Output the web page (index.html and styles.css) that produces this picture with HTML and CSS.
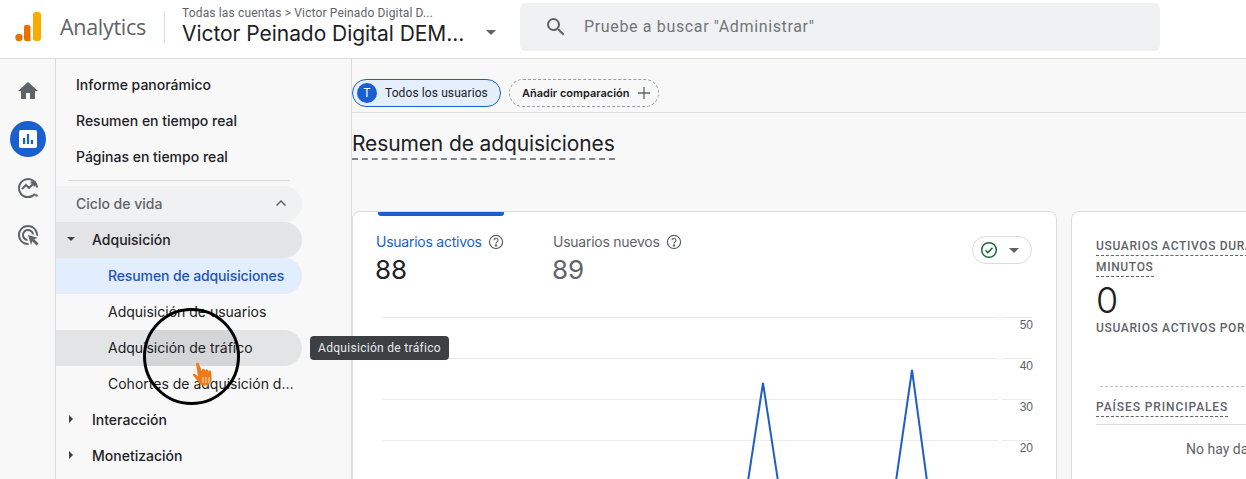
FILE: index.html
```html
<!DOCTYPE html>
<html lang="es">
<head>
    <meta charset="UTF-8">
    <meta name="viewport" content="width=device-width, initial-scale=1.0">
    <title>Resumen de adquisiciones</title>
    <link rel="stylesheet" href="styles.css">
</head>
<body>
    <header class="topbar">
        <div class="brand">
            <svg class="brand-logo" width="28" height="32" viewBox="0 0 28 32">
                <circle cx="5" cy="26.500" r="3.700" fill="#e37400"/>
                <path d="M10 16a2 2 0 0 1 2-2h2.500a2 2 0 0 1 2 2v14h-4.500a2 2 0 0 1-2-2z" fill="#e37400"/>
                <rect x="19" y="1" width="8" height="29" rx="3" fill="#f9ab00"/>
            </svg>
            <span class="brand-name">Analytics</span>
        </div>
        <div class="account">
            <div class="account-path">Todas las cuentas <span class="path-sep">&gt;</span> Victor Peinado Digital D...</div>
            <div class="account-name">Victor Peinado Digital DEM...</div>
        </div>
        <span class="caret account-caret"></span>
        <div class="search">
            <svg width="24" height="24" viewBox="0 0 24 24" fill="#5f6368"><path d="M15.500 14h-.79l-.28-.27A6.470 6.470 0 0 0 16 9.500 6.500 6.500 0 1 0 9.500 16c1.610 0 3.090-.59 4.230-1.570l.27.28v.79l5 4.990L20.490 19zm-6 0C7.010 14 5 11.990 5 9.500S7.010 5 9.500 5 14 7.010 14 9.500 11.990 14 9.500 14z"/></svg>
            <span class="search-text">Pruebe a buscar "Administrar"</span>
        </div>
    </header>

    <div class="layout">
        <aside class="rail">
            <div class="rail-slot">
                <svg width="24" height="24" viewBox="0 0 24 24" fill="#5f6368"><path d="M10 20v-6h4v6h5v-8h3L12 3 2 12h3v8z"/></svg>
            </div>
            <div class="rail-slot">
                <div class="rail-active">
                    <svg width="20" height="20" viewBox="0 0 20 20"><rect x="1" y="1" width="18" height="18" rx="2" fill="#fff"/><path d="M5 9h2.200v6H5zM8.900 5h2.200v10H8.900zM12.800 11H15v4h-2.200z" fill="#1a5fd0"/></svg>
                </div>
            </div>
            <div class="rail-slot">
                <svg width="24" height="24" viewBox="0 0 24 24" fill="none" stroke="#5f6368" stroke-width="2"><path d="M19 18.800A9 9 0 1 1 21 12.500"/><path d="M6 14l4-4 3 3 5-5M14.500 7.500H18.500V11.500"/><circle cx="20.500" cy="20.500" r="1.300" fill="#5f6368" stroke="none"/></svg>
            </div>
            <div class="rail-slot">
                <svg width="24" height="24" viewBox="0 0 24 24" fill="#5f6368"><path d="M11.710 17.990C8.530 17.840 6 15.220 6 12c0-3.310 2.690-6 6-6 3.220 0 5.840 2.530 5.990 5.710l-2.100-.63C15.480 9.310 13.890 8 12 8c-2.210 0-4 1.790-4 4 0 1.890 1.310 3.480 3.080 3.890l.63 2.100zM22 12c0 .3-.01.6-.04.9l-1.970-.59c.01-.1.01-.21.01-.31 0-4.420-3.580-8-8-8s-8 3.580-8 8 3.580 8 8 8c.1 0 .21 0 .31-.01l.59 1.970c-.3.03-.6.04-.9.04-5.520 0-10-4.480-10-10S6.480 2 12 2s10 4.480 10 10zm-3.770 4.260L22 15l-10-3 3 10 1.260-3.770 4.270 4.270 1.980-1.980-4.280-4.260z"/></svg>
            </div>
        </aside>

        <nav class="sidenav">
            <a class="nav-item">Informe panorámico</a>
            <a class="nav-item">Resumen en tiempo real</a>
            <a class="nav-item">Páginas en tiempo real</a>
            <div class="nav-divider"></div>
            <a class="nav-item nav-section">Ciclo de vida
                <svg width="18" height="18" viewBox="0 0 18 18" fill="none" stroke="#5f6368" stroke-width="1.500"><path d="M4.500 11.500L9 7l4.500 4.500"/></svg>
            </a>
            <a class="nav-item nav-group nav-open"><span class="tri tri-down"></span>Adquisición</a>
            <a class="nav-item nav-sub nav-current">Resumen de adquisiciones</a>
            <a class="nav-item nav-sub">Adquisición de usuarios</a>
            <a class="nav-item nav-sub nav-hover"><span class="ripple"></span><span class="nav-label">Adquisición de tráfico</span></a>
            <a class="nav-item nav-sub"><span class="nav-label nav-trim">Cohortes de adquisición de usuarios</span></a>
            <a class="nav-item nav-group"><span class="tri tri-right"></span>Interacción</a>
            <a class="nav-item nav-group"><span class="tri tri-right"></span>Monetización</a>
        </nav>

        <main class="content">
            <div class="chips">
                <div class="chip chip-user"><span class="chip-badge">T</span>Todos los usuarios</div>
                <div class="chip chip-add">Añadir comparación
                    <svg width="14" height="14" viewBox="0 0 14 14" stroke="#5f6368" stroke-width="1.300"><path d="M7 1v12M1 7h12"/></svg>
                </div>
            </div>
            <div class="page-title"><h1>Resumen de adquisiciones</h1></div>

            <div class="cards">
                <section class="card card-main">
                    <div class="tab-mark"></div>
                    <div class="metrics">
                        <div class="metric metric-active">
                            <div class="metric-label">Usuarios activos
                                <svg width="16" height="16" viewBox="0 0 16 16" fill="none" stroke="#5f6368" stroke-width="1.200"><circle cx="8" cy="8" r="6.600"/><path d="M6 6.300a2 2 0 1 1 3 1.700c-.7.400-1 .8-1 1.600"/><circle cx="8" cy="11.500" r=".6" fill="#5f6368"/></svg>
                            </div>
                            <div class="metric-value">88</div>
                        </div>
                        <div class="metric metric-new">
                            <div class="metric-label">Usuarios nuevos
                                <svg width="16" height="16" viewBox="0 0 16 16" fill="none" stroke="#5f6368" stroke-width="1.200"><circle cx="8" cy="8" r="6.600"/><path d="M6 6.300a2 2 0 1 1 3 1.700c-.7.400-1 .8-1 1.600"/><circle cx="8" cy="11.500" r=".6" fill="#5f6368"/></svg>
                            </div>
                            <div class="metric-value">89</div>
                        </div>
                        <div class="status-pill">
                            <svg width="18" height="18" viewBox="0 0 18 18" fill="none" stroke="#1e6b3a" stroke-width="1.500"><circle cx="9" cy="9" r="7.300"/><path d="M5.500 9.300l2.400 2.300 4.600-4.800"/></svg>
                            <span class="caret"></span>
                        </div>
                    </div>
                    <svg class="chart" width="703" height="162" viewBox="0 0 703 162">
                        <g stroke="#e8eaed" stroke-width="1">
                            <path d="M29 0.500H645M649 0.500H679"/>
                            <path d="M29 41.500H645M649 41.500H679"/>
                            <path d="M29 82.500H645M649 82.500H679"/>
                            <path d="M29 123.500H645M649 123.500H679"/>
                        </g>
                        <g class="chart-axis">
                            <text x="680" y="12" text-anchor="end">50</text>
                            <text x="680" y="53" text-anchor="end">40</text>
                            <text x="680" y="94" text-anchor="end">30</text>
                            <text x="680" y="135" text-anchor="end">20</text>
                        </g>
                        <g fill="none" stroke="#1f5fc4" stroke-width="2">
                            <path d="M395 164L410 66L425 164"/>
                            <path d="M543 164L559 53L574 164"/>
                        </g>
                    </svg>
                </section>

                <section class="card card-side">
                    <div class="side-head"><span class="dash-label">USUARIOS ACTIVOS DURANTE LOS ÚLTIMOS 30</span><br><span class="dash-label">MINUTOS</span></div>
                    <div class="side-value">0</div>
                    <div class="side-head side-sub">USUARIOS ACTIVOS POR MINUTO</div>
                    <div class="side-spark"></div>
                    <div class="side-head side-countries"><span class="dash-label">PAÍSES PRINCIPALES</span></div>
                    <div class="side-rule"></div>
                    <div class="side-empty">No hay datos disponibles</div>
                </section>
            </div>
        </main>
    </div>

    <!-- click highlight from the screen recording, sits over the nav -->
    <div class="click-ring"></div>
    <svg class="hand" width="26" height="28" viewBox="0 0 26 28">
        <path d="M4 2.500c1-1.200 2.600-.8 3 .6l2.900 7.200.3-1.900c.6-1 2-1 2.500.1l.4 1.300.5-1c.7-.8 2-.6 2.400.5l.3 1.100.6-.6c.8-.6 2-.2 2.200.9l.6 6.300c.2 3.500-2.200 7.200-6.500 7.500-3.600.2-5.800-1.500-7.300-4.300L1 14.500c-.5-1.200.8-2.300 2-1.500l3 2.500z" fill="#ef7a1a"/>
        <path d="M11 16v6M14 16v6M17 16v6" stroke="#fff" stroke-width="1" opacity=".75"/>
    </svg>
    <div class="tooltip">Adquisición de tráfico</div>
</body>
</html>
```

FILE: styles.css
```css
* {
    margin: 0;
    padding: 0;
    box-sizing: border-box;
}

html, body {
    height: 100%;
    overflow: hidden;
}

body {
    position: relative;
    display: flex;
    flex-direction: column;
    font-family: 'Inter', 'Roboto', sans-serif;
    font-size: 14px;
    color: #202124;
    background-color: #f8f8f8;
}

/* top bar */
.topbar {
    flex: none;
    display: flex;
    align-items: center;
    height: 59px;
    padding: 3px 0 8px 14px;
    background-color: #fff;
    border-bottom: 1px solid #dadce0;
}

.brand {
    display: flex;
    align-items: center;
    gap: 18px;
    width: 151px;
    height: 32px;
    border-right: 1px solid #dadce0;
}

.brand-logo {
    flex: none;
}

.brand-name {
    font-family: 'Open Sans', sans-serif;
    font-size: 21.500px;
    color: #5f6368;
    letter-spacing: -0.3px;
}

.account {
    margin-left: 17px;
    width: 290px;
}

.account-path {
    font-family: 'Roboto', sans-serif;
    font-size: 12px;
    line-height: 14px;
    letter-spacing: 0.15px;
    color: #5f6368;
    white-space: nowrap;
}

.account-name {
    font-size: 21px;
    line-height: 28px;
    letter-spacing: -0.05px;
    white-space: nowrap;
}

.caret {
    display: inline-block;
    width: 0;
    height: 0;
    border-left: 5px solid transparent;
    border-right: 5px solid transparent;
    border-top: 5px solid #5f6368;
}

.account-caret {
    margin-left: 14px;
    margin-top: 12px;
}

.search {
    display: flex;
    align-items: center;
    gap: 16px;
    margin-left: 24px;
    width: 640px;
    height: 48px;
    padding-left: 24px;
    background-color: #f0f1f3;
    border-radius: 6px;
}

.search-text {
    font-family: 'Roboto', sans-serif;
    font-size: 16px;
    letter-spacing: 0.65px;
    color: #70757a;
}

/* body columns */
.layout {
    flex: 1;
    display: flex;
    min-height: 0;
}

.rail {
    flex: none;
    display: flex;
    flex-direction: column;
    align-items: center;
    width: 56px;
    padding-top: 8px;
    border-right: 1px solid #dadce0;
}

.rail-slot {
    display: flex;
    align-items: center;
    justify-content: center;
    width: 100%;
    height: 48px;
}

.rail-active {
    display: flex;
    align-items: center;
    justify-content: center;
    width: 36px;
    height: 36px;
    border-radius: 50%;
    background-color: #1a5fd0;
}

.sidenav {
    flex: none;
    width: 296px;
    padding-top: 8px;
    background-color: #f8f8f8;
    border-right: 1px solid #dadce0;
}

.nav-item {
    display: flex;
    align-items: center;
    width: 246px;
    height: 36px;
    padding-left: 20px;
    padding-bottom: 2px;
    font-size: 14px;
    font-weight: 500;
    color: #202124;
    white-space: nowrap;
    border-radius: 0 18px 18px 0;
}

.nav-divider {
    width: 222px;
    height: 1px;
    margin: 5px 0 5px 12px;
    background-color: #dadce0;
}

.nav-section {
    justify-content: space-between;
    padding-right: 12px;
    color: #5f6368;
    background-color: #f0f1f3;
}

.nav-group {
    padding-left: 11px;
}

.nav-open {
    background-color: #e3e4e6;
}

.nav-sub {
    padding-left: 52px;
    font-weight: 400;
}

.nav-current {
    color: #1a56b8;
    font-weight: 500;
    letter-spacing: -0.12px;
    background-color: #e2edfd;
}

.nav-hover {
    position: relative;
    overflow: hidden;
    background-color: #e3e4e6;
}

.ripple {
    position: absolute;
    left: 88px;
    top: -22px;
    width: 96px;
    height: 96px;
    border-radius: 50%;
    background-color: #d4d5d7;
}

.nav-label {
    position: relative;
}

.nav-trim {
    display: block;
    width: 186px;
    overflow: hidden;
    text-overflow: ellipsis;
}

.tri {
    width: 0;
    height: 0;
    margin-right: 17px;
}

.tri-right {
    margin-left: 2px;
    margin-right: 19px;
    border-top: 4px solid transparent;
    border-bottom: 4px solid transparent;
    border-left: 4px solid #3c4043;
}

.tri-down {
    border-left: 4px solid transparent;
    border-right: 4px solid transparent;
    border-top: 4px solid #3c4043;
}

/* report area */
.content {
    flex: 1;
    min-width: 0;
    overflow: hidden;
}

.chips {
    display: flex;
    align-items: center;
    gap: 8px;
    height: 54px;
    padding-top: 14px;
    border-bottom: 1px solid #dadce0;
}

.chip {
    display: flex;
    align-items: center;
    height: 28px;
    border-radius: 14px;
    font-size: 12px;
    white-space: nowrap;
}

.chip-user {
    width: 149px;
    padding-left: 4px;
    gap: 8px;
    font-family: 'Roboto', sans-serif;
    letter-spacing: 0.1px;
    background-color: #e5eefc;
    border: 1px solid #1a5fd0;
}

.chip-badge {
    display: flex;
    align-items: center;
    justify-content: center;
    width: 20px;
    height: 20px;
    border-radius: 50%;
    color: #fff;
    background-color: #1a5fd0;
}

.chip-add {
    width: 150px;
    padding-left: 12px;
    gap: 7px;
    font-size: 11px;
    font-weight: 600;
    border: 1px dashed #9aa0a6;
}

.page-title {
    height: 98px;
    padding-top: 16px;
}

.page-title h1 {
    display: inline-block;
    font-size: 21px;
    font-weight: 400;
    line-height: 29px;
    letter-spacing: -0.12px;
    border-bottom: 2px dashed #80868b;
}

.cards {
    display: flex;
    gap: 14px;
    align-items: stretch;
}

.card {
    flex: none;
    height: 300px;
    background-color: #fff;
    border: 1px solid #dadce0;
    border-radius: 8px;
}

.card-main {
    width: 705px;
}

.tab-mark {
    width: 126px;
    height: 4px;
    margin-left: 25px;
    background-color: #1a5fd0;
    border-radius: 0 0 3px 3px;
}

.metrics {
    display: flex;
    align-items: flex-start;
    height: 101px;
    padding: 15px 24px 0 23px;
}

.metric-label {
    display: flex;
    align-items: center;
    gap: 6px;
    height: 21px;
    font-size: 14px;
    letter-spacing: -0.25px;
    color: #5f6368;
}

.metric-value {
    margin-left: -1px;
    font-size: 26px;
    line-height: 36px;
}

.metric-active {
    width: 178px;
}

.metric-active .metric-label {
    color: #1a5fd0;
}

.metric-new {
    margin-left: -1px;
}

.metric-new .metric-value {
    color: #5f6368;
}

.status-pill {
    display: flex;
    align-items: center;
    justify-content: space-between;
    width: 60px;
    height: 28px;
    margin-left: auto;
    margin-top: 5px;
    padding: 0 12px 0 7px;
    border: 1px solid #dadce0;
    border-radius: 14px;
}

.chart {
    display: block;
}

.chart-axis text {
    font-family: 'Liberation Sans', sans-serif;
    font-size: 12px;
    fill: #5f6368;
}

.card-side {
    width: 320px;
    padding: 26px 24px 0;
}

.side-head {
    font-family: 'Roboto', sans-serif;
    font-size: 12px;
    font-weight: 500;
    line-height: 21px;
    letter-spacing: 0.65px;
    color: #5f6368;
    white-space: nowrap;
}

.dash-label {
    display: inline-block;
    vertical-align: top;
    line-height: 17px;
    margin-bottom: 3px;
    border-bottom: 1px dashed #5f6368;
}

.side-value {
    font-size: 36px;
    font-weight: 300;
    line-height: 44px;
    margin-top: -2px;
}

.side-sub {
    line-height: 16px;
    margin-top: -2px;
}

.side-spark {
    width: 260px;
    height: 1px;
    margin: 50px 0 0 4px;
    border-top: 1px dashed #bdc1c6;
}

.side-countries {
    margin-top: 12px;
    letter-spacing: 0.9px;
}

.side-rule {
    height: 1px;
    width: 300px;
    margin-top: 4px;
    background-color: #dadce0;
}

.side-empty {
    margin-top: 16px;
    margin-left: 90px;
    font-family: 'Roboto', sans-serif;
    font-size: 14px;
    color: #5f6368;
    white-space: nowrap;
}

/* overlays */
.click-ring {
    position: absolute;
    left: 143px;
    top: 308px;
    width: 97px;
    height: 97px;
    border: 3px solid #000;
    border-radius: 50%;
}

.hand {
    position: absolute;
    left: 192px;
    top: 361px;
}

.tooltip {
    position: absolute;
    left: 310px;
    top: 336px;
    height: 24px;
    padding: 0 8px;
    font-family: 'Roboto', sans-serif;
    font-size: 12px;
    line-height: 24px;
    letter-spacing: 0.3px;
    color: #e8eaed;
    background-color: #3c4043;
    border-radius: 4px;
    white-space: nowrap;
}
```
